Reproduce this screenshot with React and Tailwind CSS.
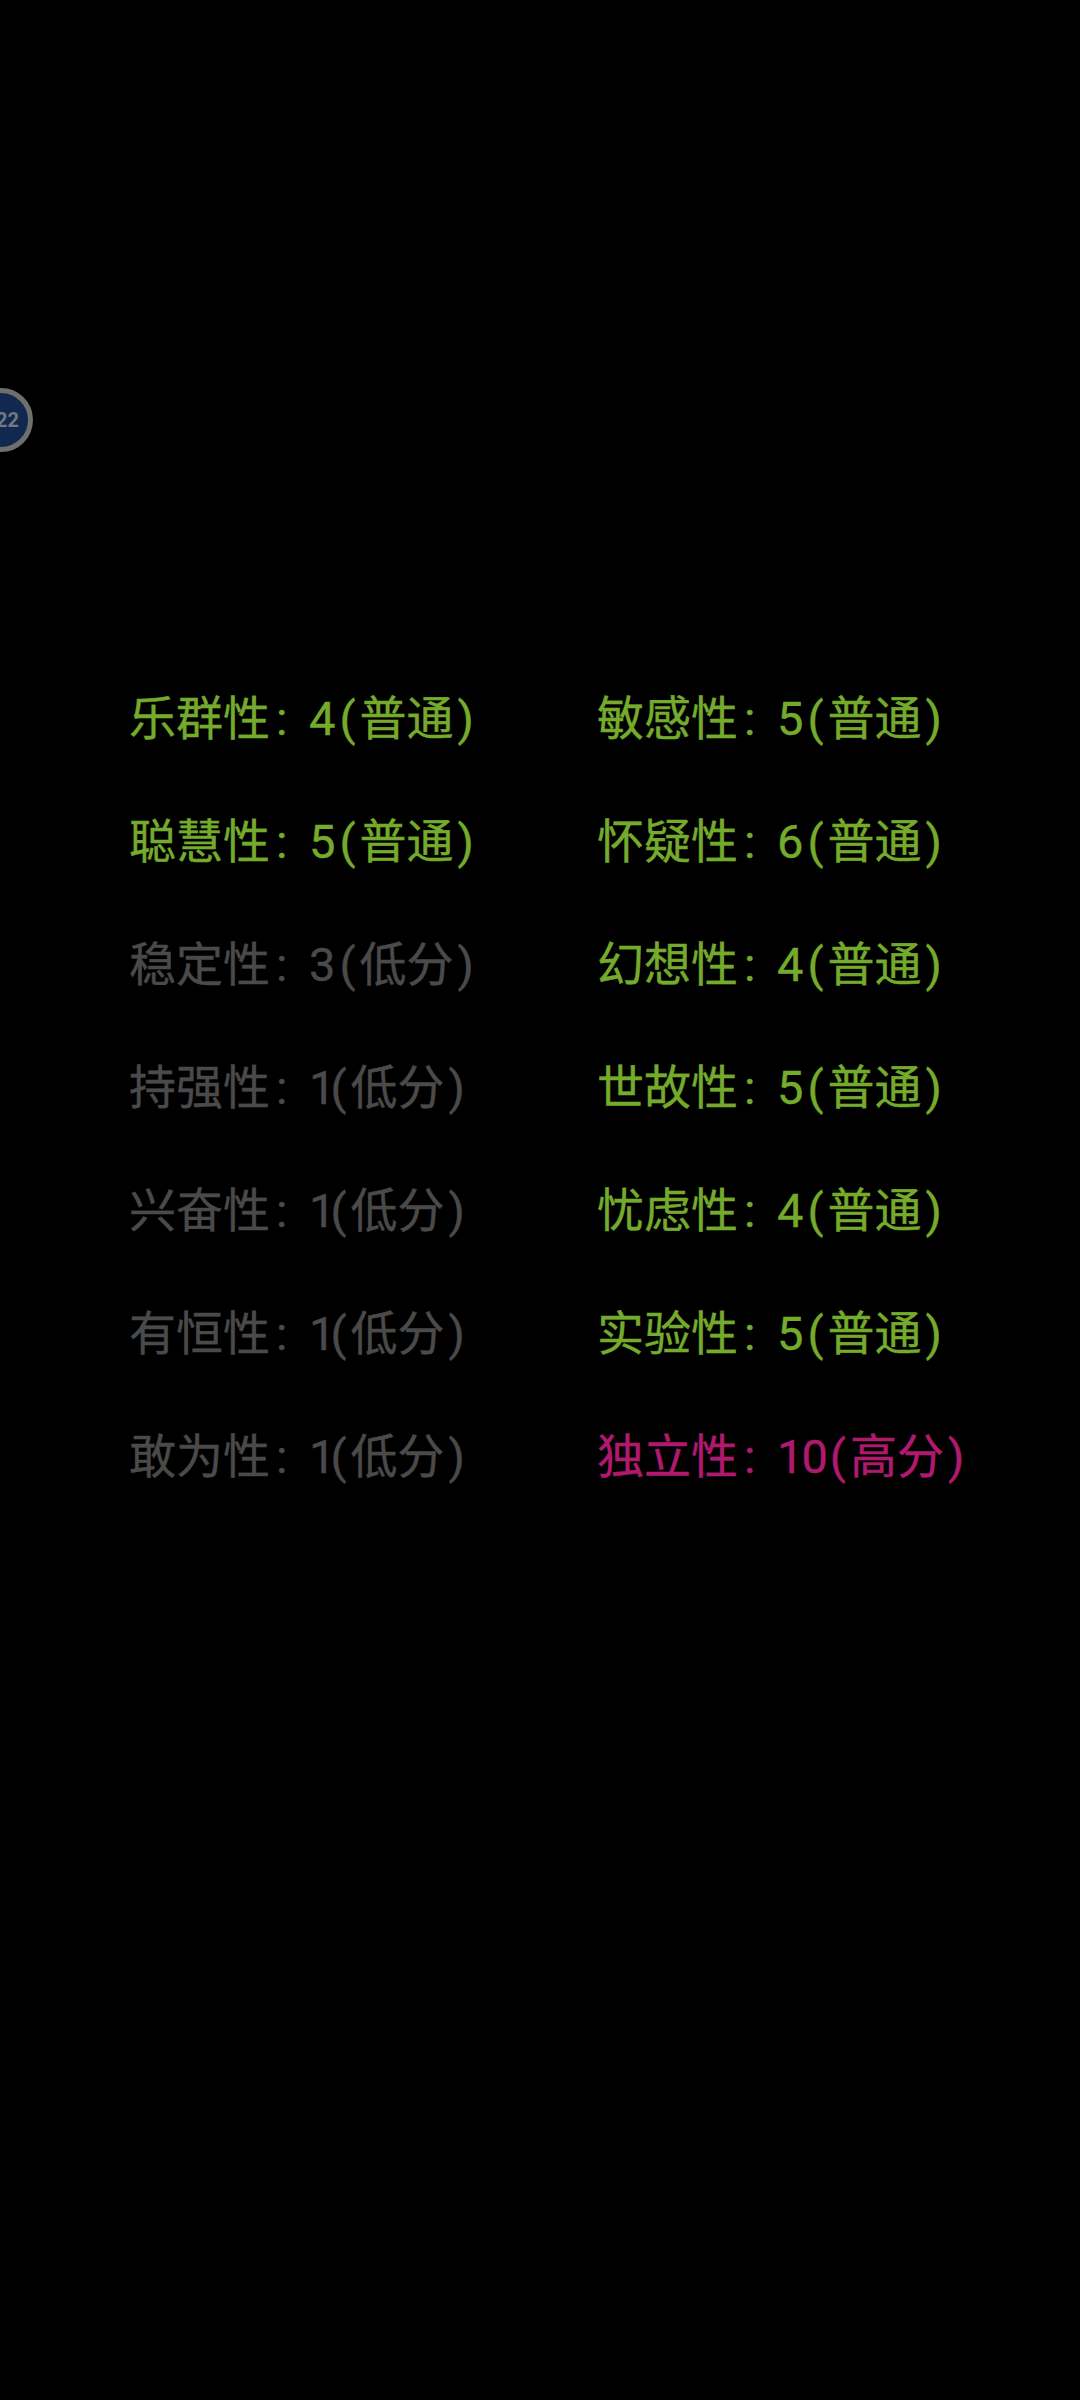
const left = [
  ["乐群性", "4", "普通", "g"],
  ["聪慧性", "5", "普通", "g"],
  ["稳定性", "3", "低分", "d"],
  ["持强性", "1", "低分", "d"],
  ["兴奋性", "1", "低分", "d"],
  ["有恒性", "1", "低分", "d"],
  ["敢为性", "1", "低分", "d"],
];
const right = [
  ["敏感性", "5", "普通", "g"],
  ["怀疑性", "6", "普通", "g"],
  ["幻想性", "4", "普通", "g"],
  ["世故性", "5", "普通", "g"],
  ["忧虑性", "4", "普通", "g"],
  ["实验性", "5", "普通", "g"],
  ["独立性", "10", "高分", "p"],
];

function Row({ item }) {
  const color = item[3] === "g" ? "text-[#75ab2c]" : item[3] === "p" ? "text-[#b01a6e]" : "text-[#4a4a4a]";
  const digit = item[1] === "1" ? "tracking-[-5px]" : item[1] === "10" ? "tracking-[-2px]" : "";
  const paren = item[1] === "1" ? "pl-0" : "pl-[4px]";
  return (
    <div className={`h-[123px] leading-[118px] text-[47px] [-webkit-text-stroke:0.4px] whitespace-nowrap font-['Roboto','Noto_Sans_CJK_SC',sans-serif] ${color}`}>
      <span className="font-['Noto_Sans_CJK_SC',sans-serif]">{item[0]}</span>
      <span className="inline-block w-[39px] pl-[6px]">:</span>
      <span className={`inline-block ${digit}`}>{item[1]}</span>
      <span className={`inline-block pr-[4px] ${paren}`}>(</span>
      <span className="font-['Noto_Sans_CJK_SC',sans-serif]">{item[2]}</span>
      <span className="inline-block pl-[4px]">)</span>
    </div>
  );
}

export default function App() {
  return (
    <div className="relative w-[1080px] h-[2400px] bg-black overflow-hidden pt-[656px] pl-[129px]">
      <div className="absolute left-[-31px] top-[388px] w-[64px] h-[64px] rounded-full bg-[#12294f] border-[5px] border-[#6f6f6f] flex items-center justify-end pr-[9px]">
        <span className="text-[20px] font-bold text-[#6f7885] font-['Roboto',sans-serif]">22</span>
      </div>
      <div className="flex">
        <div className="w-[468px] flex flex-col">
          {left.map((r) => <Row key={r[0]} item={r} />)}
        </div>
        <div className="flex flex-col">
          {right.map((r) => <Row key={r[0]} item={r} />)}
        </div>
      </div>
    </div>
  );
}
